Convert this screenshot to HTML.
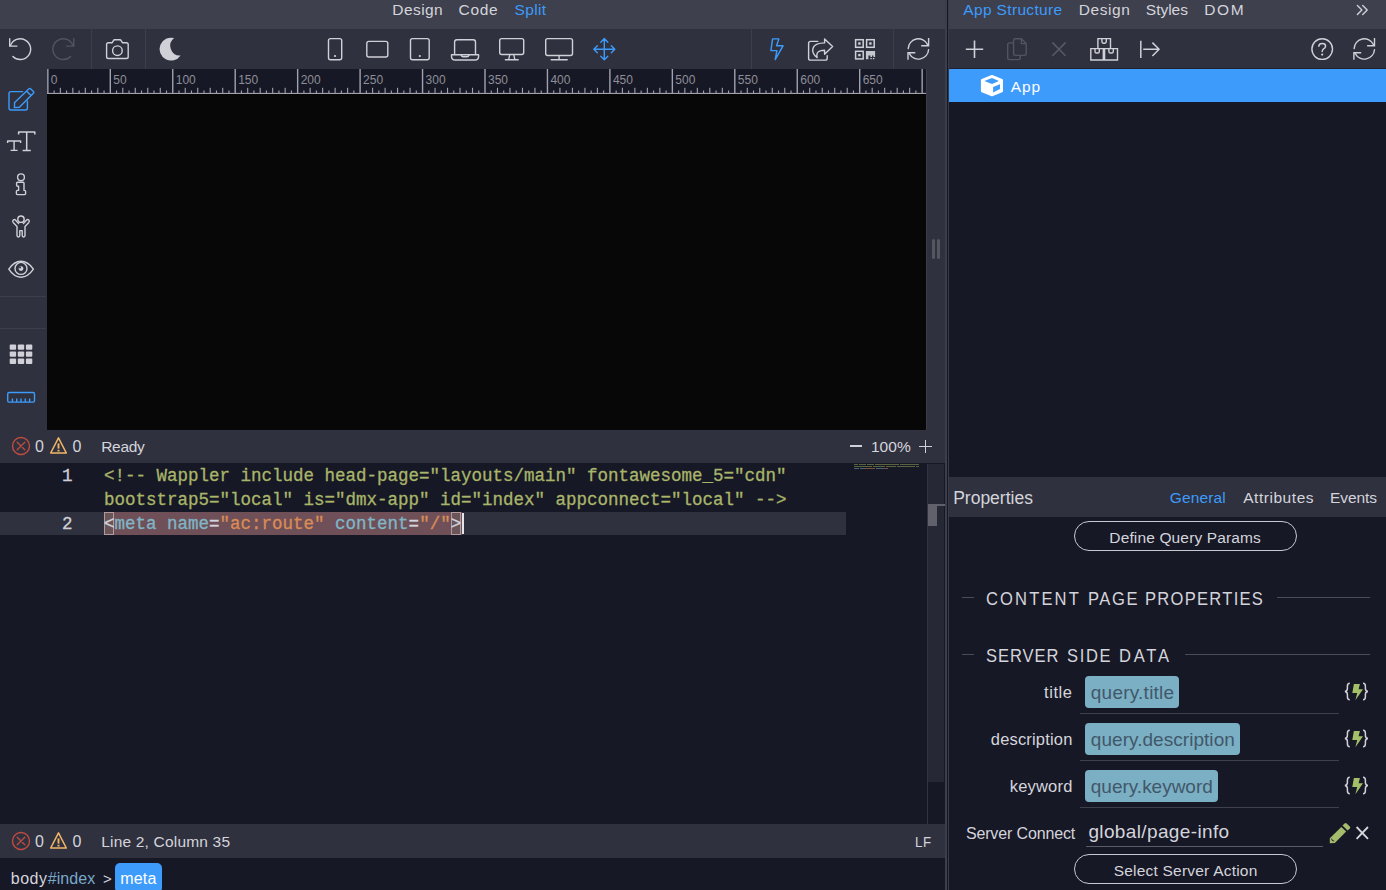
<!DOCTYPE html>
<html>
<head>
<meta charset="utf-8">
<title>Wappler</title>
<style>
*{box-sizing:border-box;margin:0;padding:0}
html,body{width:1386px;height:890px;overflow:hidden;background:#171825}
body{font-family:"Liberation Sans",sans-serif;color:#d4d4dc;position:relative;font-size:16px}
.abs{position:absolute}
.t{position:absolute;white-space:nowrap;line-height:1}
.blue{color:#3d9bfb}
svg{position:absolute;overflow:visible}
.mono{font-family:"Liberation Mono",monospace;-webkit-text-stroke:0.3px}
.s{fill:none;stroke:#d0d0d8;stroke-width:1.4;stroke-linecap:round;stroke-linejoin:round}
.sb{fill:none;stroke:#3d9bfb;stroke-width:1.4;stroke-linecap:round;stroke-linejoin:round}
.sd{fill:none;stroke:#52545f;stroke-width:1.4;stroke-linecap:round;stroke-linejoin:round}
</style>
</head>
<body>
<div class="abs" style="left:0px;top:0px;width:946px;height:29px;background:#3e404d;"></div>
<div class="t " style="left:392.33px;top:2.00px;font-size:15.5px;letter-spacing:0.422px;">Design</div>
<div class="t " style="left:458.53px;top:2.00px;font-size:15.5px;letter-spacing:0.704px;">Code</div>
<div class="t " style="left:514.60px;top:2.00px;font-size:15.5px;letter-spacing:0.336px;color:#3d9bfb;">Split</div>
<div class="abs" style="left:0px;top:29px;width:946px;height:40px;background:#2f313e;"></div>
<div class="abs" style="left:91px;top:29px;width:1px;height:40px;background:#3c3e4b;"></div>
<div class="abs" style="left:145px;top:29px;width:1px;height:40px;background:#3c3e4b;"></div>
<div class="abs" style="left:751px;top:29px;width:1px;height:40px;background:#3c3e4b;"></div>
<div class="abs" style="left:893px;top:29px;width:1px;height:40px;background:#3c3e4b;"></div>
<div class="abs" style="left:0px;top:69px;width:47px;height:361px;background:#2f313e;"></div>
<div class="abs" style="left:0px;top:296px;width:46px;height:1px;background:#3c3e4b;"></div>
<div class="abs" style="left:0px;top:328px;width:46px;height:1px;background:#3c3e4b;"></div>
<div class="abs" style="left:47px;top:69px;width:879px;height:25px;background:#171825;overflow:hidden">
<svg width="879" height="25" viewBox="47 69 879 25" style="left:0;top:0"><rect x="47" y="92.9" width="879" height="1.1" fill="#a2a2ac"/><rect x="47.15" y="69" width="1.4" height="25" fill="#a2a2ac"/><rect x="53.55" y="90.5" width="1.1" height="3" fill="#a2a2ac"/><rect x="59.79" y="87.8" width="1.1" height="6" fill="#a2a2ac"/><rect x="66.04" y="90.5" width="1.1" height="3" fill="#a2a2ac"/><rect x="72.28" y="87.8" width="1.1" height="6" fill="#a2a2ac"/><rect x="78.53" y="90.5" width="1.1" height="3" fill="#a2a2ac"/><rect x="84.77" y="87.8" width="1.1" height="6" fill="#a2a2ac"/><rect x="91.02" y="90.5" width="1.1" height="3" fill="#a2a2ac"/><rect x="97.26" y="87.8" width="1.1" height="6" fill="#a2a2ac"/><rect x="103.51" y="90.5" width="1.1" height="3" fill="#a2a2ac"/><rect x="109.60" y="69" width="1.4" height="25" fill="#a2a2ac"/><rect x="116.00" y="90.5" width="1.1" height="3" fill="#a2a2ac"/><rect x="122.24" y="87.8" width="1.1" height="6" fill="#a2a2ac"/><rect x="128.48" y="90.5" width="1.1" height="3" fill="#a2a2ac"/><rect x="134.73" y="87.8" width="1.1" height="6" fill="#a2a2ac"/><rect x="140.97" y="90.5" width="1.1" height="3" fill="#a2a2ac"/><rect x="147.22" y="87.8" width="1.1" height="6" fill="#a2a2ac"/><rect x="153.47" y="90.5" width="1.1" height="3" fill="#a2a2ac"/><rect x="159.71" y="87.8" width="1.1" height="6" fill="#a2a2ac"/><rect x="165.95" y="90.5" width="1.1" height="3" fill="#a2a2ac"/><rect x="172.05" y="69" width="1.4" height="25" fill="#a2a2ac"/><rect x="178.44" y="90.5" width="1.1" height="3" fill="#a2a2ac"/><rect x="184.69" y="87.8" width="1.1" height="6" fill="#a2a2ac"/><rect x="190.93" y="90.5" width="1.1" height="3" fill="#a2a2ac"/><rect x="197.18" y="87.8" width="1.1" height="6" fill="#a2a2ac"/><rect x="203.42" y="90.5" width="1.1" height="3" fill="#a2a2ac"/><rect x="209.67" y="87.8" width="1.1" height="6" fill="#a2a2ac"/><rect x="215.91" y="90.5" width="1.1" height="3" fill="#a2a2ac"/><rect x="222.16" y="87.8" width="1.1" height="6" fill="#a2a2ac"/><rect x="228.40" y="90.5" width="1.1" height="3" fill="#a2a2ac"/><rect x="234.50" y="69" width="1.4" height="25" fill="#a2a2ac"/><rect x="240.89" y="90.5" width="1.1" height="3" fill="#a2a2ac"/><rect x="247.14" y="87.8" width="1.1" height="6" fill="#a2a2ac"/><rect x="253.38" y="90.5" width="1.1" height="3" fill="#a2a2ac"/><rect x="259.63" y="87.8" width="1.1" height="6" fill="#a2a2ac"/><rect x="265.88" y="90.5" width="1.1" height="3" fill="#a2a2ac"/><rect x="272.12" y="87.8" width="1.1" height="6" fill="#a2a2ac"/><rect x="278.37" y="90.5" width="1.1" height="3" fill="#a2a2ac"/><rect x="284.61" y="87.8" width="1.1" height="6" fill="#a2a2ac"/><rect x="290.86" y="90.5" width="1.1" height="3" fill="#a2a2ac"/><rect x="296.95" y="69" width="1.4" height="25" fill="#a2a2ac"/><rect x="303.35" y="90.5" width="1.1" height="3" fill="#a2a2ac"/><rect x="309.59" y="87.8" width="1.1" height="6" fill="#a2a2ac"/><rect x="315.84" y="90.5" width="1.1" height="3" fill="#a2a2ac"/><rect x="322.08" y="87.8" width="1.1" height="6" fill="#a2a2ac"/><rect x="328.32" y="90.5" width="1.1" height="3" fill="#a2a2ac"/><rect x="334.57" y="87.8" width="1.1" height="6" fill="#a2a2ac"/><rect x="340.81" y="90.5" width="1.1" height="3" fill="#a2a2ac"/><rect x="347.06" y="87.8" width="1.1" height="6" fill="#a2a2ac"/><rect x="353.31" y="90.5" width="1.1" height="3" fill="#a2a2ac"/><rect x="359.40" y="69" width="1.4" height="25" fill="#a2a2ac"/><rect x="365.80" y="90.5" width="1.1" height="3" fill="#a2a2ac"/><rect x="372.04" y="87.8" width="1.1" height="6" fill="#a2a2ac"/><rect x="378.29" y="90.5" width="1.1" height="3" fill="#a2a2ac"/><rect x="384.53" y="87.8" width="1.1" height="6" fill="#a2a2ac"/><rect x="390.78" y="90.5" width="1.1" height="3" fill="#a2a2ac"/><rect x="397.02" y="87.8" width="1.1" height="6" fill="#a2a2ac"/><rect x="403.27" y="90.5" width="1.1" height="3" fill="#a2a2ac"/><rect x="409.51" y="87.8" width="1.1" height="6" fill="#a2a2ac"/><rect x="415.75" y="90.5" width="1.1" height="3" fill="#a2a2ac"/><rect x="421.85" y="69" width="1.4" height="25" fill="#a2a2ac"/><rect x="428.25" y="90.5" width="1.1" height="3" fill="#a2a2ac"/><rect x="434.49" y="87.8" width="1.1" height="6" fill="#a2a2ac"/><rect x="440.74" y="90.5" width="1.1" height="3" fill="#a2a2ac"/><rect x="446.98" y="87.8" width="1.1" height="6" fill="#a2a2ac"/><rect x="453.23" y="90.5" width="1.1" height="3" fill="#a2a2ac"/><rect x="459.47" y="87.8" width="1.1" height="6" fill="#a2a2ac"/><rect x="465.72" y="90.5" width="1.1" height="3" fill="#a2a2ac"/><rect x="471.96" y="87.8" width="1.1" height="6" fill="#a2a2ac"/><rect x="478.21" y="90.5" width="1.1" height="3" fill="#a2a2ac"/><rect x="484.30" y="69" width="1.4" height="25" fill="#a2a2ac"/><rect x="490.69" y="90.5" width="1.1" height="3" fill="#a2a2ac"/><rect x="496.94" y="87.8" width="1.1" height="6" fill="#a2a2ac"/><rect x="503.19" y="90.5" width="1.1" height="3" fill="#a2a2ac"/><rect x="509.43" y="87.8" width="1.1" height="6" fill="#a2a2ac"/><rect x="515.68" y="90.5" width="1.1" height="3" fill="#a2a2ac"/><rect x="521.92" y="87.8" width="1.1" height="6" fill="#a2a2ac"/><rect x="528.17" y="90.5" width="1.1" height="3" fill="#a2a2ac"/><rect x="534.41" y="87.8" width="1.1" height="6" fill="#a2a2ac"/><rect x="540.66" y="90.5" width="1.1" height="3" fill="#a2a2ac"/><rect x="546.75" y="69" width="1.4" height="25" fill="#a2a2ac"/><rect x="553.15" y="90.5" width="1.1" height="3" fill="#a2a2ac"/><rect x="559.39" y="87.8" width="1.1" height="6" fill="#a2a2ac"/><rect x="565.64" y="90.5" width="1.1" height="3" fill="#a2a2ac"/><rect x="571.88" y="87.8" width="1.1" height="6" fill="#a2a2ac"/><rect x="578.13" y="90.5" width="1.1" height="3" fill="#a2a2ac"/><rect x="584.37" y="87.8" width="1.1" height="6" fill="#a2a2ac"/><rect x="590.62" y="90.5" width="1.1" height="3" fill="#a2a2ac"/><rect x="596.86" y="87.8" width="1.1" height="6" fill="#a2a2ac"/><rect x="603.11" y="90.5" width="1.1" height="3" fill="#a2a2ac"/><rect x="609.20" y="69" width="1.4" height="25" fill="#a2a2ac"/><rect x="615.60" y="90.5" width="1.1" height="3" fill="#a2a2ac"/><rect x="621.84" y="87.8" width="1.1" height="6" fill="#a2a2ac"/><rect x="628.09" y="90.5" width="1.1" height="3" fill="#a2a2ac"/><rect x="634.33" y="87.8" width="1.1" height="6" fill="#a2a2ac"/><rect x="640.58" y="90.5" width="1.1" height="3" fill="#a2a2ac"/><rect x="646.82" y="87.8" width="1.1" height="6" fill="#a2a2ac"/><rect x="653.07" y="90.5" width="1.1" height="3" fill="#a2a2ac"/><rect x="659.31" y="87.8" width="1.1" height="6" fill="#a2a2ac"/><rect x="665.56" y="90.5" width="1.1" height="3" fill="#a2a2ac"/><rect x="671.65" y="69" width="1.4" height="25" fill="#a2a2ac"/><rect x="678.05" y="90.5" width="1.1" height="3" fill="#a2a2ac"/><rect x="684.29" y="87.8" width="1.1" height="6" fill="#a2a2ac"/><rect x="690.54" y="90.5" width="1.1" height="3" fill="#a2a2ac"/><rect x="696.78" y="87.8" width="1.1" height="6" fill="#a2a2ac"/><rect x="703.03" y="90.5" width="1.1" height="3" fill="#a2a2ac"/><rect x="709.27" y="87.8" width="1.1" height="6" fill="#a2a2ac"/><rect x="715.52" y="90.5" width="1.1" height="3" fill="#a2a2ac"/><rect x="721.76" y="87.8" width="1.1" height="6" fill="#a2a2ac"/><rect x="728.01" y="90.5" width="1.1" height="3" fill="#a2a2ac"/><rect x="734.10" y="69" width="1.4" height="25" fill="#a2a2ac"/><rect x="740.50" y="90.5" width="1.1" height="3" fill="#a2a2ac"/><rect x="746.74" y="87.8" width="1.1" height="6" fill="#a2a2ac"/><rect x="752.99" y="90.5" width="1.1" height="3" fill="#a2a2ac"/><rect x="759.23" y="87.8" width="1.1" height="6" fill="#a2a2ac"/><rect x="765.48" y="90.5" width="1.1" height="3" fill="#a2a2ac"/><rect x="771.72" y="87.8" width="1.1" height="6" fill="#a2a2ac"/><rect x="777.97" y="90.5" width="1.1" height="3" fill="#a2a2ac"/><rect x="784.21" y="87.8" width="1.1" height="6" fill="#a2a2ac"/><rect x="790.46" y="90.5" width="1.1" height="3" fill="#a2a2ac"/><rect x="796.55" y="69" width="1.4" height="25" fill="#a2a2ac"/><rect x="802.95" y="90.5" width="1.1" height="3" fill="#a2a2ac"/><rect x="809.19" y="87.8" width="1.1" height="6" fill="#a2a2ac"/><rect x="815.44" y="90.5" width="1.1" height="3" fill="#a2a2ac"/><rect x="821.68" y="87.8" width="1.1" height="6" fill="#a2a2ac"/><rect x="827.93" y="90.5" width="1.1" height="3" fill="#a2a2ac"/><rect x="834.17" y="87.8" width="1.1" height="6" fill="#a2a2ac"/><rect x="840.42" y="90.5" width="1.1" height="3" fill="#a2a2ac"/><rect x="846.66" y="87.8" width="1.1" height="6" fill="#a2a2ac"/><rect x="852.91" y="90.5" width="1.1" height="3" fill="#a2a2ac"/><rect x="859.00" y="69" width="1.4" height="25" fill="#a2a2ac"/><rect x="865.40" y="90.5" width="1.1" height="3" fill="#a2a2ac"/><rect x="871.64" y="87.8" width="1.1" height="6" fill="#a2a2ac"/><rect x="877.89" y="90.5" width="1.1" height="3" fill="#a2a2ac"/><rect x="884.13" y="87.8" width="1.1" height="6" fill="#a2a2ac"/><rect x="890.38" y="90.5" width="1.1" height="3" fill="#a2a2ac"/><rect x="896.62" y="87.8" width="1.1" height="6" fill="#a2a2ac"/><rect x="902.87" y="90.5" width="1.1" height="3" fill="#a2a2ac"/><rect x="909.11" y="87.8" width="1.1" height="6" fill="#a2a2ac"/><rect x="915.36" y="90.5" width="1.1" height="3" fill="#a2a2ac"/><rect x="921.45" y="69" width="1.4" height="25" fill="#a2a2ac"/></svg>
<div class="t" style="left:3.85px;top:5px;font-size:12px;color:#8e8e98">0</div>
<div class="t" style="left:66.30px;top:5px;font-size:12px;color:#8e8e98">50</div>
<div class="t" style="left:128.75px;top:5px;font-size:12px;color:#8e8e98">100</div>
<div class="t" style="left:191.20px;top:5px;font-size:12px;color:#8e8e98">150</div>
<div class="t" style="left:253.65px;top:5px;font-size:12px;color:#8e8e98">200</div>
<div class="t" style="left:316.10px;top:5px;font-size:12px;color:#8e8e98">250</div>
<div class="t" style="left:378.55px;top:5px;font-size:12px;color:#8e8e98">300</div>
<div class="t" style="left:441.00px;top:5px;font-size:12px;color:#8e8e98">350</div>
<div class="t" style="left:503.45px;top:5px;font-size:12px;color:#8e8e98">400</div>
<div class="t" style="left:565.90px;top:5px;font-size:12px;color:#8e8e98">450</div>
<div class="t" style="left:628.35px;top:5px;font-size:12px;color:#8e8e98">500</div>
<div class="t" style="left:690.80px;top:5px;font-size:12px;color:#8e8e98">550</div>
<div class="t" style="left:753.25px;top:5px;font-size:12px;color:#8e8e98">600</div>
<div class="t" style="left:815.70px;top:5px;font-size:12px;color:#8e8e98">650</div>
</div>
<div class="abs" style="left:47px;top:94px;width:879px;height:336px;background:#070707;"></div>
<div class="abs" style="left:926px;top:69px;width:20px;height:361px;background:#2f313e;"></div>
<div class="abs" style="left:926px;top:69px;width:1px;height:361px;background:#3a3c49;"></div>
<div class="abs" style="left:932px;top:239px;width:3px;height:20px;background:#55565f;border-radius:1.5px"></div>
<div class="abs" style="left:937px;top:239px;width:3px;height:20px;background:#55565f;border-radius:1.5px"></div>
<div class="abs" style="left:0px;top:430px;width:946px;height:32.5px;background:#2f313e;"></div>
<svg width="1386" height="890" viewBox="0 0 1386 890" style="left:0;top:0"><g transform="translate(0,0.00)"><circle cx="21" cy="446" r="8.5" fill="none" stroke="#bf4c40" stroke-width="1.4"/><path d="M17.2 442.2 L24.8 449.8 M24.8 442.2 L17.2 449.8" fill="none" stroke="#bf4c40" stroke-width="1.3" stroke-linecap="round"/><path d="M58.5 437.9 L66.3 453 L50.7 453 Z" fill="none" stroke="#f2b666" stroke-width="1.5" stroke-linejoin="round"/><path d="M58.5 443.4 L58.5 448.6" stroke="#f2b666" stroke-width="1.9" fill="none"/><rect x="57.5" y="449.8" width="2" height="1.7" fill="#f2b666"/></g></svg>
<div class="t " style="left:34.98px;top:439.00px;font-size:16px;letter-spacing:0.636px;">0</div>
<div class="t " style="left:72.38px;top:439.00px;font-size:16px;letter-spacing:0.636px;">0</div>
<div class="t " style="left:101.23px;top:439.00px;font-size:15.5px;letter-spacing:-0.327px;">Ready</div>
<div class="abs" style="left:850px;top:445.2px;width:12.2px;height:1.6px;background:#d0d0d8;"></div>
<div class="t " style="left:870.92px;top:439.00px;font-size:15.5px;letter-spacing:0.062px;">100%</div>
<div class="abs" style="left:919px;top:445.5px;width:12.7px;height:1.6px;background:#d0d0d8;"></div>
<div class="abs" style="left:924.5px;top:440px;width:1.6px;height:12.7px;background:#d0d0d8;"></div>
<div class="abs" style="left:0px;top:462.5px;width:946px;height:361.5px;background:#171825;"></div>
<div class="abs" style="left:0px;top:512px;width:846px;height:23px;background:#2f313e;"></div>
<div class="abs" style="left:104px;top:512px;width:357.5px;height:23px;background:#705058;"></div>
<div class="abs" style="left:104px;top:512px;width:10px;height:23px;background:#6a5558;border:1px solid #b39a9c"></div>
<div class="abs" style="left:451px;top:512px;width:10px;height:23px;background:#6a5558;border:1px solid #b39a9c"></div>
<div class="abs" style="left:461.5px;top:513px;width:2px;height:21px;background:#e4e4ea;"></div>
<div class="t mono" style="left:104px;top:468.00px;font-size:17.5px;color:#a8b56a">&lt;!-- Wappler include head-page="layouts/main" fontawesome_5="cdn"</div>
<div class="t mono" style="left:104px;top:492.00px;font-size:17.5px;color:#a8b56a">bootstrap5="local" is="dmx-app" id="index" appconnect="local" --&gt;</div>
<div class="t mono" style="left:104px;top:516.00px;font-size:17.5px;color:#a8b56a"><span style="color:#d4d4dc">&lt;</span><span style="color:#7fb6c6">meta name</span><span style="color:#d4d4dc">=</span><span style="color:#d98c56">"ac:route"</span> <span style="color:#7fb6c6">content</span><span style="color:#d4d4dc">=</span><span style="color:#d98c56">"/"</span><span style="color:#d4d4dc">&gt;</span></div>
<div class="t mono" style="left:62px;top:468.00px;font-size:17.5px;color:#cfcfd8">1</div>
<div class="t mono" style="left:62px;top:516.00px;font-size:17.5px;color:#cfcfd8">2</div>
<div class="abs" style="left:854.0px;top:464.2px;width:4.0px;height:1.3px;background:#5a6340;"></div>
<div class="abs" style="left:859.0px;top:464.2px;width:7.0px;height:1.3px;background:#5a6340;"></div>
<div class="abs" style="left:867.0px;top:464.2px;width:7.0px;height:1.3px;background:#5a6340;"></div>
<div class="abs" style="left:875.0px;top:464.2px;width:24.0px;height:1.3px;background:#5a6340;"></div>
<div class="abs" style="left:900.0px;top:464.2px;width:19.0px;height:1.3px;background:#5a6340;"></div>
<div class="abs" style="left:854.0px;top:466.2px;width:18.0px;height:1.3px;background:#5a6340;"></div>
<div class="abs" style="left:873.0px;top:466.2px;width:12.0px;height:1.3px;background:#5a6340;"></div>
<div class="abs" style="left:886.0px;top:466.2px;width:10.0px;height:1.3px;background:#5a6340;"></div>
<div class="abs" style="left:897.0px;top:466.2px;width:18.0px;height:1.3px;background:#5a6340;"></div>
<div class="abs" style="left:916.0px;top:466.2px;width:3.0px;height:1.3px;background:#5a6340;"></div>
<div class="abs" style="left:854.0px;top:468.2px;width:1.0px;height:1.2px;background:#5e5e68;"></div>
<div class="abs" style="left:855.0px;top:468.2px;width:4.0px;height:1.2px;background:#456674;"></div>
<div class="abs" style="left:860.0px;top:468.2px;width:4.0px;height:1.2px;background:#456674;"></div>
<div class="abs" style="left:864.0px;top:468.2px;width:1.0px;height:1.2px;background:#5e5e68;"></div>
<div class="abs" style="left:865.0px;top:468.2px;width:10.0px;height:1.2px;background:#7a5238;"></div>
<div class="abs" style="left:876.0px;top:468.2px;width:7.0px;height:1.2px;background:#456674;"></div>
<div class="abs" style="left:883.0px;top:468.2px;width:1.0px;height:1.2px;background:#5e5e68;"></div>
<div class="abs" style="left:884.0px;top:468.2px;width:3.0px;height:1.2px;background:#7a5238;"></div>
<div class="abs" style="left:887.0px;top:468.2px;width:1.0px;height:1.2px;background:#5e5e68;"></div>
<div class="abs" style="left:927px;top:464px;width:17.3px;height:318px;background:#262836;"></div>
<div class="abs" style="left:927px;top:464px;width:1px;height:360px;background:#32343f;"></div>
<div class="abs" style="left:928px;top:504px;width:16.5px;height:2.2px;background:#60616b;"></div>
<div class="abs" style="left:928px;top:504px;width:8.5px;height:22px;background:#60616b;"></div>
<div class="abs" style="left:0px;top:824px;width:946px;height:34px;background:#2f313e;"></div>
<svg width="1386" height="890" viewBox="0 0 1386 890" style="left:0;top:0"><g transform="translate(0,395.00)"><circle cx="21" cy="446" r="8.5" fill="none" stroke="#bf4c40" stroke-width="1.4"/><path d="M17.2 442.2 L24.8 449.8 M24.8 442.2 L17.2 449.8" fill="none" stroke="#bf4c40" stroke-width="1.3" stroke-linecap="round"/><path d="M58.5 437.9 L66.3 453 L50.7 453 Z" fill="none" stroke="#f2b666" stroke-width="1.5" stroke-linejoin="round"/><path d="M58.5 443.4 L58.5 448.6" stroke="#f2b666" stroke-width="1.9" fill="none"/><rect x="57.5" y="449.8" width="2" height="1.7" fill="#f2b666"/></g></svg>
<div class="t " style="left:34.98px;top:834.00px;font-size:16px;letter-spacing:0.636px;">0</div>
<div class="t " style="left:72.38px;top:834.00px;font-size:16px;letter-spacing:0.636px;">0</div>
<div class="t " style="left:101.23px;top:834.00px;font-size:15.5px;letter-spacing:0.188px;">Line 2, Column 35</div>
<div class="t " style="left:915.31px;top:834.00px;font-size:15.5px;letter-spacing:0.547px;transform:scaleX(0.86);transform-origin:0 0;">LF</div>
<div class="abs" style="left:0px;top:858px;width:946px;height:32px;background:#171825;"></div>
<div class="t " style="left:10.68px;top:871.00px;font-size:16px;letter-spacing:0.556px;">body</div>
<div class="t " style="left:47.74px;top:871.00px;font-size:16px;letter-spacing:0.074px;color:#79a9c8;">#index</div>
<div class="t " style="left:103.06px;top:871.00px;font-size:15px;letter-spacing:0.995px;">&gt;</div>
<div class="abs" style="left:115px;top:863px;width:47.3px;height:30px;background:#3d9bfb;border-radius:5px"></div>
<div class="t " style="left:120.34px;top:871.00px;font-size:16px;letter-spacing:0.157px;color:#ffffff;">meta</div>
<div class="abs" style="left:945.3px;top:0px;width:1.8px;height:890px;background:#3c3e4b;"></div>
<div class="abs" style="left:947.1px;top:0px;width:1.1px;height:890px;background:#171825;"></div>
<div class="abs" style="left:948.2px;top:0px;width:0.9px;height:890px;background:#393b48;"></div>
<div class="abs" style="left:949px;top:0px;width:437px;height:29px;background:#3e404d;"></div>
<div class="t " style="left:963.37px;top:2.00px;font-size:15.5px;letter-spacing:0.337px;color:#3d9bfb;">App Structure</div>
<div class="t " style="left:1078.63px;top:2.00px;font-size:15.5px;letter-spacing:0.622px;">Design</div>
<div class="t " style="left:1145.80px;top:2.00px;font-size:15.5px;letter-spacing:-0.010px;">Styles</div>
<div class="t " style="left:1204.13px;top:2.00px;font-size:15.5px;letter-spacing:1.740px;">DOM</div>
<div class="abs" style="left:949px;top:29px;width:437px;height:40px;background:#2f313e;"></div>
<div class="abs" style="left:949px;top:68px;width:437px;height:1px;background:#20212e;"></div>
<div class="abs" style="left:949px;top:69px;width:437px;height:33px;background:#3d9bfb;"></div>
<div class="t " style="left:1010.87px;top:79.00px;font-size:15.5px;letter-spacing:0.896px;color:#ffffff;">App</div>
<div class="abs" style="left:949px;top:102px;width:437px;height:375px;background:#171825;"></div>
<div class="abs" style="left:949px;top:477px;width:437px;height:40px;background:#2f313e;"></div>
<div class="t " style="left:953.17px;top:490.00px;font-size:17.5px;letter-spacing:-0.000px;">Properties</div>
<div class="t " style="left:1169.82px;top:490.00px;font-size:15.5px;letter-spacing:0.127px;color:#3d9bfb;">General</div>
<div class="t " style="left:1243.17px;top:490.00px;font-size:15.5px;letter-spacing:0.546px;">Attributes</div>
<div class="t " style="left:1329.93px;top:490.00px;font-size:15.5px;letter-spacing:-0.051px;">Events</div>
<div class="abs" style="left:949px;top:517px;width:437px;height:373px;background:#171825;"></div>
<div class="abs" style="left:1074px;top:521px;width:223px;height:30px;background:transparent;border:1px solid #c8c8d2;border-radius:15px"></div>
<div class="t " style="left:1109.33px;top:530.00px;font-size:15.5px;letter-spacing:0.139px;">Define Query Params</div>
<div class="abs" style="left:1074px;top:854px;width:223px;height:30px;background:transparent;border:1px solid #c8c8d2;border-radius:15px"></div>
<div class="t " style="left:1113.70px;top:863.00px;font-size:15.5px;letter-spacing:0.212px;">Select Server Action</div>
<div class="abs" style="left:962px;top:597px;width:12px;height:1px;background:#4a4c59;"></div>
<div class="abs" style="left:1277px;top:597px;width:92.5px;height:1px;background:#4a4c59;"></div>
<div class="t " style="left:986.07px;top:590.00px;font-size:18px;letter-spacing:2.314px;transform:scaleX(0.92);transform-origin:0 0;">CONTENT</div>
<div class="t " style="left:1087.54px;top:590.00px;font-size:18px;letter-spacing:1.688px;transform:scaleX(0.92);transform-origin:0 0;">PAGE</div>
<div class="t " style="left:1145.34px;top:590.00px;font-size:18px;letter-spacing:1.384px;transform:scaleX(0.92);transform-origin:0 0;">PROPERTIES</div>
<div class="abs" style="left:962px;top:654px;width:12px;height:1px;background:#4a4c59;"></div>
<div class="abs" style="left:1184.5px;top:654px;width:185px;height:1px;background:#4a4c59;"></div>
<div class="t " style="left:986.15px;top:647.00px;font-size:18px;letter-spacing:1.024px;transform:scaleX(0.92);transform-origin:0 0;">SERVER</div>
<div class="t " style="left:1066.95px;top:647.00px;font-size:18px;letter-spacing:1.808px;transform:scaleX(0.92);transform-origin:0 0;">SIDE</div>
<div class="t " style="left:1119.34px;top:647.00px;font-size:18px;letter-spacing:3.035px;transform:scaleX(0.92);transform-origin:0 0;">DATA</div>
<div class="t " style="left:1044.05px;top:684.00px;font-size:16.5px;letter-spacing:0.575px;">title</div>
<div class="abs" style="left:1084.8px;top:676px;width:94.40000000000009px;height:32px;background:#7bafc4;border-radius:4px"></div>
<div class="t " style="left:1090.80px;top:683.00px;font-size:19px;letter-spacing:0.238px;color:#41586a;">query.title</div>
<div class="abs" style="left:1080px;top:713px;width:259px;height:1px;background:#3e404d;"></div>
<svg width="1386" height="890" viewBox="0 0 1386 890" style="left:0;top:0"><g transform="translate(0,0)"><path d="M1349.8 683.2 C1347.6 683.2 1347.4 684.6 1347.4 686.2 L1347.4 688.6 C1347.4 690.4 1346.6 691.3 1344.9 691.5 C1346.6 691.7 1347.4 692.6 1347.4 694.4 L1347.4 696.8 C1347.4 698.4 1347.6 699.8 1349.8 699.8" fill="none" stroke="#d0d0d8" stroke-width="1.5"/><path d="M1363 683.2 C1365.2 683.2 1365.4 684.6 1365.4 686.2 L1365.4 688.6 C1365.4 690.4 1366.2 691.3 1367.9 691.5 C1366.2 691.7 1365.4 692.6 1365.4 694.4 L1365.4 696.8 C1365.4 698.4 1365.2 699.8 1363 699.8" fill="none" stroke="#d0d0d8" stroke-width="1.5"/><path d="M1353.9 684 L1359.9 684 L1358.6 689.2 L1363 689.2 L1355.4 700.2 L1357.2 693 L1352.3 693 Z" fill="#a3c068"/></g></svg>
<div class="t " style="left:990.81px;top:731.00px;font-size:16.5px;letter-spacing:0.175px;">description</div>
<div class="abs" style="left:1084.8px;top:723px;width:155.20000000000005px;height:32px;background:#7bafc4;border-radius:4px"></div>
<div class="t " style="left:1090.80px;top:730.00px;font-size:19px;letter-spacing:0.046px;color:#41586a;">query.description</div>
<div class="abs" style="left:1080px;top:760px;width:259px;height:1px;background:#3e404d;"></div>
<svg width="1386" height="890" viewBox="0 0 1386 890" style="left:0;top:0"><g transform="translate(0,47)"><path d="M1349.8 683.2 C1347.6 683.2 1347.4 684.6 1347.4 686.2 L1347.4 688.6 C1347.4 690.4 1346.6 691.3 1344.9 691.5 C1346.6 691.7 1347.4 692.6 1347.4 694.4 L1347.4 696.8 C1347.4 698.4 1347.6 699.8 1349.8 699.8" fill="none" stroke="#d0d0d8" stroke-width="1.5"/><path d="M1363 683.2 C1365.2 683.2 1365.4 684.6 1365.4 686.2 L1365.4 688.6 C1365.4 690.4 1366.2 691.3 1367.9 691.5 C1366.2 691.7 1365.4 692.6 1365.4 694.4 L1365.4 696.8 C1365.4 698.4 1365.2 699.8 1363 699.8" fill="none" stroke="#d0d0d8" stroke-width="1.5"/><path d="M1353.9 684 L1359.9 684 L1358.6 689.2 L1363 689.2 L1355.4 700.2 L1357.2 693 L1352.3 693 Z" fill="#a3c068"/></g></svg>
<div class="t " style="left:1009.69px;top:778.00px;font-size:16.5px;letter-spacing:0.203px;">keyword</div>
<div class="abs" style="left:1084.8px;top:770px;width:133.20000000000005px;height:32px;background:#7bafc4;border-radius:4px"></div>
<div class="t " style="left:1090.80px;top:777.00px;font-size:19px;letter-spacing:-0.011px;color:#41586a;">query.keyword</div>
<div class="abs" style="left:1080px;top:807px;width:259px;height:1px;background:#3e404d;"></div>
<svg width="1386" height="890" viewBox="0 0 1386 890" style="left:0;top:0"><g transform="translate(0,94)"><path d="M1349.8 683.2 C1347.6 683.2 1347.4 684.6 1347.4 686.2 L1347.4 688.6 C1347.4 690.4 1346.6 691.3 1344.9 691.5 C1346.6 691.7 1347.4 692.6 1347.4 694.4 L1347.4 696.8 C1347.4 698.4 1347.6 699.8 1349.8 699.8" fill="none" stroke="#d0d0d8" stroke-width="1.5"/><path d="M1363 683.2 C1365.2 683.2 1365.4 684.6 1365.4 686.2 L1365.4 688.6 C1365.4 690.4 1366.2 691.3 1367.9 691.5 C1366.2 691.7 1365.4 692.6 1365.4 694.4 L1365.4 696.8 C1365.4 698.4 1365.2 699.8 1363 699.8" fill="none" stroke="#d0d0d8" stroke-width="1.5"/><path d="M1353.9 684 L1359.9 684 L1358.6 689.2 L1363 689.2 L1355.4 700.2 L1357.2 693 L1352.3 693 Z" fill="#a3c068"/></g></svg>
<div class="t " style="left:965.88px;top:826.00px;font-size:16px;letter-spacing:-0.134px;">Server Connect</div>
<div class="t " style="left:1088.40px;top:822.00px;font-size:19px;letter-spacing:0.370px;">global/page-info</div>
<div class="abs" style="left:1085.8px;top:846px;width:237.2px;height:1px;background:#5a5c67;"></div>
<svg width="1386" height="890" viewBox="0 0 1386 890" style="left:0;top:0"><path class="s" d="M10.5 45.6 A10.4 10.4 0 1 1 12.9 56.5"/><path class="s" d="M9.7 38.3 L9.7 46.1 L17.4 46.1" style="stroke-linecap:butt;stroke-linejoin:miter"/><path class="sd" d="M73 45.6 A10.4 10.4 0 1 0 70.6 56.5"/><path class="sd" d="M73.8 38.3 L73.8 46.1 L66.1 46.1" style="stroke-linecap:butt;stroke-linejoin:miter"/><path class="s" d="M108.4 42.7 L112.2 42.7 L113.4 40.6 Q113.8 39.8 114.8 39.8 L119.8 39.8 Q120.8 39.8 121.2 40.6 L122.4 42.7 L126.4 42.7 Q128.2 42.7 128.2 44.5 L128.2 56.7 Q128.2 58.5 126.4 58.5 L108.4 58.5 Q106.6 58.5 106.6 56.7 L106.6 44.5 Q106.6 42.7 108.4 42.7 Z"/><circle class="s" cx="117.4" cy="50.7" r="4.8"/><path d="M174.2 38.1 A11.45 11.45 0 1 0 180.6 55.4 A9.6 9.6 0 0 1 174.2 38.1 Z" fill="#d0d0d8"/><rect class="s" x="328.5" y="38.6" width="13.2" height="21.2" rx="2"/><circle cx="335" cy="56" r="1.1" fill="#d0d0d8"/><rect class="s" x="366.8" y="41.4" width="21" height="15.6" rx="2"/><rect class="s" x="410.5" y="38.6" width="18.7" height="21.2" rx="2"/><circle cx="419.8" cy="56" r="1.1" fill="#d0d0d8"/><path class="s" d="M454.6 54.4 L454.6 42 Q454.6 39.7 456.9 39.7 L473.2 39.7 Q475.5 39.7 475.5 42 L475.5 54.4"/><path class="s" d="M451.5 54.7 L478.6 54.7 L478.6 56.2 Q478.6 60 474.8 60 L455.3 60 Q451.5 60 451.5 56.2 Z"/><path class="s" d="M461 54.7 Q461.6 56.8 463.4 56.8 L466.8 56.8 Q468.6 56.8 469.2 54.7"/><rect class="s" x="499.7" y="38.6" width="24" height="15.9" rx="2"/><path class="s" d="M509.8 54.7 L508.6 59.6 M513.7 54.7 L514.9 59.6 M505.4 59.7 L518.2 59.7"/><rect class="s" x="545.7" y="38.6" width="26.8" height="16.9" rx="2"/><path class="s" d="M559.1 55.6 L559.1 59.6 M551.2 59.7 L567.2 59.7"/><path class="sb" d="M593.8 49.3 L614.8 49.3 M604.3 38.6 L604.3 59.8 M600.8 42.2 L604.3 38.6 L607.8 42.2 M600.8 56.3 L604.3 59.8 L607.8 56.3 M597.4 45.8 L593.8 49.3 L597.4 52.8 M611.3 45.8 L614.8 49.3 L611.3 52.8"/><path class="sb" d="M772.6 38.9 L778.9 38.9 L776.6 45.8 L783 45.8 L775.2 59.6 L776.9 50.6 L770.9 50.6 Z"/><path class="s" d="M817.8 41.4 L810.5 41.4 Q808.6 41.4 808.6 43.3 L808.6 58.2 Q808.6 60.1 810.5 60.1 L825.3 60.1 Q827.2 60.1 827.2 58.2 L827.2 55.6"/><path class="s" d="M824.6 38.9 L832.6 46.5 L824.6 54.2 L824.6 50.3 C819.5 50.3 815.6 51.6 817.2 57.6 C813.6 55.4 812 51.2 813 48.2 C814.4 44 819.4 43 824.6 42.9 Z"/><rect x="855.6" y="39.7" width="7.6" height="7.6" fill="none" stroke="#d0d0d8" stroke-width="1.5"/><rect x="858.2" y="42.300000000000004" width="2.4" height="2.4" fill="#d0d0d8"/><rect x="866.6" y="39.7" width="7.6" height="7.6" fill="none" stroke="#d0d0d8" stroke-width="1.5"/><rect x="869.2" y="42.300000000000004" width="2.4" height="2.4" fill="#d0d0d8"/><rect x="855.6" y="51.3" width="7.6" height="7.6" fill="none" stroke="#d0d0d8" stroke-width="1.5"/><rect x="858.2" y="53.9" width="2.4" height="2.4" fill="#d0d0d8"/><path d="M865.9 51 L875.1 51 L875.1 57 L873.4 57 L873.4 55.4 L872 55.4 L872 57 L870.4 57 L870.4 55.4 L868.4 55.4 L868.4 59.2 L865.9 59.2 Z" fill="#c6c6ce"/><rect x="870.3" y="58" width="1.4" height="1.2" fill="#d0d0d8"/><rect x="872.9" y="58" width="1.4" height="1.2" fill="#d0d0d8"/><g transform="translate(0,0)"><path class="s" d="M908.2 48.6 A10.2 10.2 0 0 1 927.6 44.6"/><path class="s" d="M928.6 49.6 A10.2 10.2 0 0 1 909.4 53.6"/><path class="s" style="stroke-linecap:butt;stroke-linejoin:miter" d="M928.6 38.1 L928.6 45.8 L921.2 45.8"/><path class="s" style="stroke-linecap:butt;stroke-linejoin:miter" d="M908 59.8 L908 52.7 L915.3 52.7"/></g><g transform="translate(445.9000000000001,0)"><path class="s" d="M908.2 48.6 A10.2 10.2 0 0 1 927.6 44.6"/><path class="s" d="M928.6 49.6 A10.2 10.2 0 0 1 909.4 53.6"/><path class="s" style="stroke-linecap:butt;stroke-linejoin:miter" d="M928.6 38.1 L928.6 45.8 L921.2 45.8"/><path class="s" style="stroke-linecap:butt;stroke-linejoin:miter" d="M908 59.8 L908 52.7 L915.3 52.7"/></g><path class="sb" d="M22.6 91.6 L10.9 91.6 Q9 91.6 9 93.5 L9 108.1 Q9 110 10.9 110 L25.5 110 Q27.4 110 27.4 108.1 L27.4 101.2"/><path class="sb" d="M14.6 102.6 L29 88.8 Q29.8 88 30.6 88.8 L33.4 91.6 Q34.2 92.4 33.4 93.2 L19.4 107.2 L14.4 107.6 Z M26.6 91.2 L31 95.6"/><path class="s" style="stroke-width:1.5;stroke-linecap:butt" d="M18.6 134.6 L18.6 132 L34.8 132 L34.8 134.6 M26.7 132 L26.7 150.4 M22.6 150.4 L30.8 150.4"/><path class="s" style="stroke-width:1.4;stroke-linecap:butt" d="M7.6 143 L7.6 141 L20.6 141 L20.6 143 M14.1 141 L14.1 150.4 M10.6 150.4 L17.6 150.4"/><circle class="s" cx="21" cy="177.3" r="3.4"/><path class="s" d="M17.6 182.2 L23 182.2 Q24 182.2 24 183.2 L24 190.4 L24.6 190.4 Q25.6 190.4 25.6 191.4 L25.6 193.6 Q25.6 194.6 24.6 194.6 L17.4 194.6 Q16.4 194.6 16.4 193.6 L16.4 191.4 Q16.4 190.4 17.4 190.4 L18.6 190.4 L18.6 186.2 L17.6 186.2 Q16.6 186.2 16.6 185.2 L16.6 183.2 Q16.6 182.2 17.6 182.2 Z"/><circle class="s" cx="21" cy="219.2" r="3.2"/><path class="s" d="M13.2 220 Q12.2 221.2 13.2 222.4 L17 226.4 L17 235.6 Q17 237 18.4 237 Q19.8 237 19.8 235.6 L19.8 230.6 L22.2 230.6 L22.2 235.6 Q22.2 237 23.6 237 Q25 237 25 235.6 L25 226.4 L28.8 222.4 Q29.8 221.2 28.8 220 Q27.6 219 26.6 220 L23.4 223.6 M18.6 223.6 L15.4 220 Q14.4 219 13.2 220"/><path class="s" d="M8.8 269.2 Q14 261.3 21 261.3 Q28 261.3 33.4 269.2 Q28 277.2 21 277.2 Q14 277.2 8.8 269.2 Z"/><circle class="s" cx="21" cy="268.4" r="6"/><circle cx="21" cy="268.6" r="2.4" fill="#d0d0d8"/><circle cx="20" cy="267.6" r="1" fill="#2f313e"/><rect x="9.7" y="344.40" width="6.4" height="5.4" rx="1" fill="#d0d0d8"/><rect x="9.7" y="351.45" width="6.4" height="5.4" rx="1" fill="#d0d0d8"/><rect x="9.7" y="358.50" width="6.4" height="5.4" rx="1" fill="#d0d0d8"/><rect x="17.8" y="344.40" width="6.4" height="5.4" rx="1" fill="#d0d0d8"/><rect x="17.8" y="351.45" width="6.4" height="5.4" rx="1" fill="#d0d0d8"/><rect x="17.8" y="358.50" width="6.4" height="5.4" rx="1" fill="#d0d0d8"/><rect x="25.9" y="344.40" width="6.4" height="5.4" rx="1" fill="#d0d0d8"/><rect x="25.9" y="351.45" width="6.4" height="5.4" rx="1" fill="#d0d0d8"/><rect x="25.9" y="358.50" width="6.4" height="5.4" rx="1" fill="#d0d0d8"/><rect class="sb" x="7.7" y="392.5" width="26.8" height="9.6" rx="1.4"/><path class="sb" style="stroke-linecap:butt" d="M12.4 402 L12.4 398.6 M16.7 402 L16.7 398.6 M21 402 L21 398.6 M25.3 402 L25.3 398.6 M29.6 402 L29.6 398.6"/><path class="s" style="stroke-width:1.6;stroke-linecap:butt" d="M965.8 49.3 L983.2 49.3 M974.5 40.6 L974.5 58"/><path class="sd" d="M1015.4 38.8 L1021.4 38.8 L1026.2 43.6 L1026.2 53.6 Q1026.2 55.4 1024.4 55.4 L1015.4 55.4 Q1013.6 55.4 1013.6 53.6 L1013.6 40.6 Q1013.6 38.8 1015.4 38.8 Z M1021.4 38.8 L1021.4 43.6 L1026.2 43.6"/><path class="sd" d="M1013.4 42.9 L1009.5 42.9 Q1007.7 42.9 1007.7 44.7 L1007.7 57.8 Q1007.7 59.6 1009.5 59.6 L1018.5 59.6 Q1020.3 59.6 1020.3 57.8 L1020.3 55.8"/><path class="sd" style="stroke-width:1.7;stroke:#565863" d="M1052.8 42.9 L1065.2 55.5 M1065.2 42.9 L1052.8 55.5"/><path class="s" style="stroke-linejoin:miter" d="M1097.9 48 L1097.9 38.6 L1110.5 38.6 L1110.5 48 M1090.8 48.6 L1117.5 48.6 L1117.5 60 L1090.8 60 Z M1103.3 48.6 L1103.3 60 M1104.6 48.6 L1104.6 60"/><path class="s" d="M1101.9 38.8 L1101.9 41.6 Q1101.9 43.2 1103.4 43.2 L1104.8 43.2 Q1106.3 43.2 1106.3 41.6 L1106.3 38.8 M1095 48.8 L1095 51.4 Q1095 53 1096.5 53 L1097.8 53 Q1099.3 53 1099.3 51.4 L1099.3 48.8 M1108.9 48.8 L1108.9 51.4 Q1108.9 53 1110.4 53 L1111.8 53 Q1113.3 53 1113.3 51.4 L1113.3 48.8"/><path class="s" style="stroke-width:1.5;stroke-linecap:butt" d="M1140.8 40.7 L1140.8 58 M1143.2 49.3 L1158.6 49.3 M1152.4 42.6 L1159.1 49.3 L1152.4 56"/><circle class="s" cx="1322.2" cy="49.1" r="10.3"/><path class="s" style="stroke-width:1.5" d="M1318.8 46.2 Q1319 43.4 1322.2 43.4 Q1325.6 43.4 1325.6 46 Q1325.6 47.8 1323.6 48.9 Q1322.2 49.8 1322.2 51.6"/><circle cx="1322.2" cy="54.6" r="1.1" fill="#d0d0d8"/><path class="s" style="stroke-width:1.4" d="M1357.4 5.6 L1361.9 10 L1357.4 14.5 M1362.7 5.6 L1367.2 10 L1362.7 14.5"/><path d="M991 75.3 Q992 74.9 993 75.3 L1002.2 79 Q1003 79.4 1003 80.3 L1003 90.9 Q1003 91.8 1002.2 92.2 L993 96.1 Q992 96.5 991 96.1 L981.7 92.2 Q980.9 91.8 980.9 90.9 L980.9 80.3 Q980.9 79.4 981.7 79 Z" fill="#fff"/><path d="M984.4 81 L992 78.1 L998.9 81 L992 83.9 Z" fill="#3d9bfb"/><path d="M993.1 87 L1000 84.3 L1000 89.1 L993.1 92.5 Z" fill="#3d9bfb"/><path d="M1329.8 838.2 L1341.3 826.9 L1346.2 831.6 L1334.8 842.9 L1329.8 843.3 Z" fill="#a4bc6c"/><path d="M1342.5 825.6 L1344.6 823.5 Q1345.6 822.6 1346.7 823.6 L1349.8 826.6 Q1350.8 827.6 1349.8 828.6 L1347.6 830.6 Z" fill="#a4bc6c"/><path d="M1331.6 838.6 L1332.2 840.6 L1334.2 841" stroke="#171825" stroke-width="0.9" fill="none"/><path d="M1356.6 827 L1368 838.8 M1368 827 L1356.6 838.8" stroke="#d6d6de" stroke-width="1.8" fill="none"/></svg>
</body>
</html>
